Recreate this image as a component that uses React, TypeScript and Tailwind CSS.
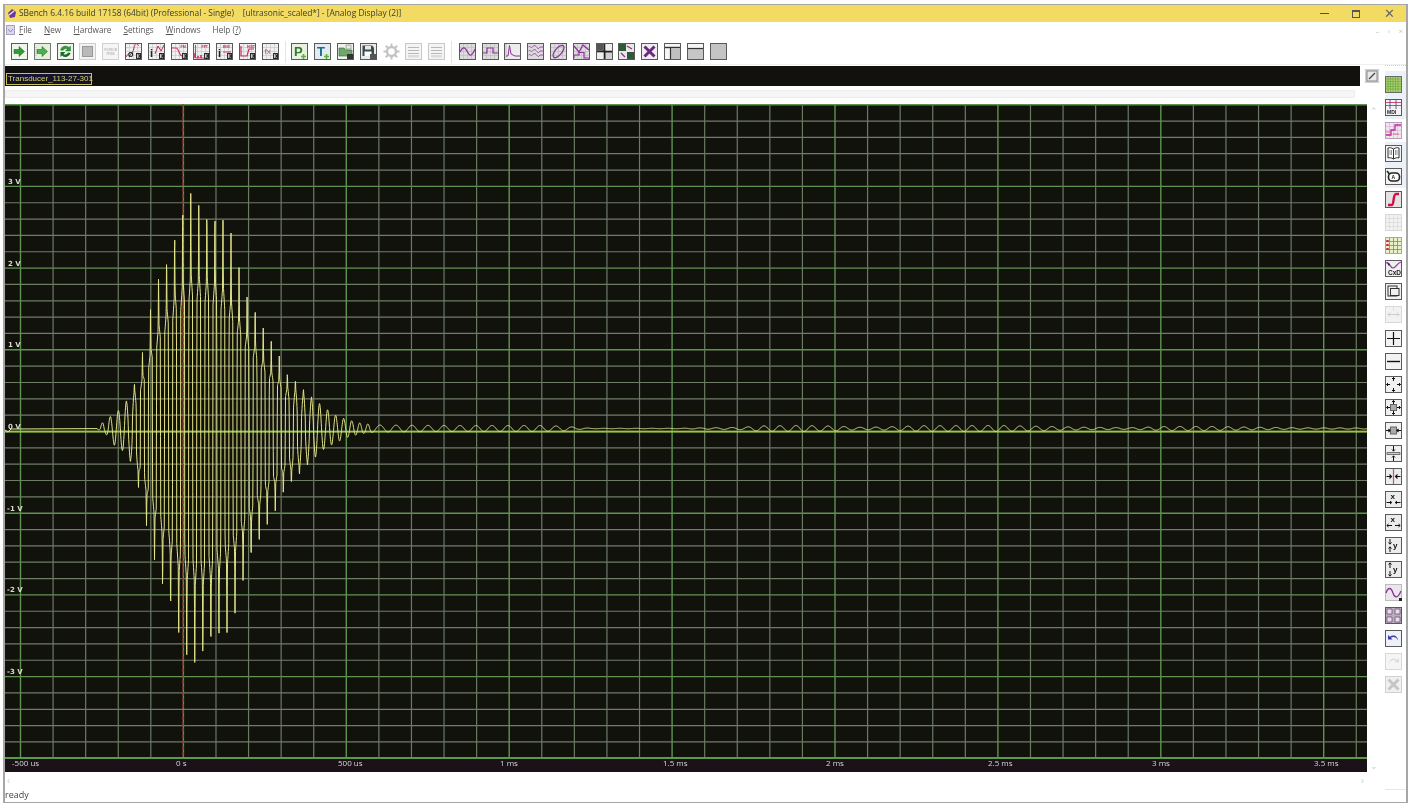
import React from "react";

const PP: number[][] = [[97,0],[103,7],[111,13],[119,19],[127,29],[135,48],[143,82],[151,122],[159,159],[167,182],[175,207],[183,224],[191,236],[199,234],[207,230],[215,227],[223,218],[231,196],[239,169],[247,145],[255,128],[263,106],[271,88],[279,77],[287,59],[295,51],[305,38],[315,29],[325,21],[335,14],[345,10],[360,6],[375,4]];
const NN: number[][] = [[97,0],[105,4],[114,16],[122,21],[131,34],[139,64],[147,101],[155,136],[163,168],[171,193],[179,218],[187,231],[195,239],[203,238],[211,232],[219,218],[227,208],[236,186],[244,159],[252,136],[260,116],[269,93],[277,81],[285,64],[293,56],[302,43],[310,33],[318,26],[326,18],[334,15],[345,9],[360,5],[375,3]];
const RR: number[][] = [[375,3.5],[450,3],[540,3],[565,2.2],[578,1],[592,0.2],[680,0.2],[700,0.6],[740,1.1],[760,2.6],[800,3],[835,2.4],[860,1.2],[885,1.6],[920,2.8],[1000,3],[1040,2.2],[1090,1.2],[1130,0.8],[1165,2],[1215,2],[1262,1.2],[1300,0.7],[1367,0.5]];

const lerp = (t: number[][], x: number) => {
  for (let i = 1; i < t.length; i++) {
    if (x <= t[i][0]) {
      const f = (x - t[i - 1][0]) / (t[i][0] - t[i - 1][0]);
      return t[i - 1][1] + f * (t[i][1] - t[i - 1][1]);
    }
  }
  return t[t.length - 1][1];
};

const SHAPE: number[][] = [[0,1],[0.4,0.66],[1.8,0.56],[2.05,-0.54],[3.6,-0.64],[4,-1],[4.4,-0.66],[5.8,-0.56],[6.05,0.54],[7.6,0.64],[8,1]];

const buildWave = () => {
  const pts: string[] = ["5,430", "8,432", "11,429", "97,428.6"];
  let ph = Math.PI / 2 - (2 * Math.PI * 94) / 8.05;
  for (let x = 97; x <= 1367; x += 0.25) {
    const period = x < 372 ? 8.05 : 16;
    ph += (2 * Math.PI * 0.25) / period;
    const s = Math.sin(ph);
    let y: number;
    if (x < 375) {
      const off = (((ph - Math.PI / 2) % (2 * Math.PI)) + 2 * Math.PI) % (2 * Math.PI);
      const step = lerp(SHAPE, (off / (2 * Math.PI)) * 8);
      const A = s >= 0 ? lerp(PP, x) : lerp(NN, x);
      const m = Math.min(Math.max((A - 25) / 40, 0), 1);
      const v = s * (1 - m) + step * m;
      y = 429 - A * v;
    } else {
      y = 428.5 - lerp(RR, x) * s;
    }
    pts.push(`${x.toFixed(2)},${y.toFixed(1)}`);
  }
  return pts.join(" ");
};

const range = (n: number) => Array.from({ length: n }, (_, i) => i);

const Plot = () => {
  const vx0 = 20.5, dx = 32.58;
  const y0 = 104.7, dy = 16.34;
  const xl: [string, number][] = [["-500 us", 12], ["0 s", 176], ["500 us", 338], ["1 ms", 500], ["1.5 ms", 663], ["2 ms", 826], ["2.5 ms", 988], ["3 ms", 1152], ["3.5 ms", 1314]];
  const yl: [string, number][] = [["3 V", 184], ["2 V", 266], ["1 V", 347], ["0 V", 429], ["-1 V", 511], ["-2 V", 592], ["-3 V", 674]];
  return (
    <svg width="1362" height="668" viewBox="5 104 1362 668" className="block shrink-0">
      <rect x="5" y="104" width="1362" height="668" fill="#12120c" />
      <rect x="5" y="758" width="1362" height="14" fill="#1b1118" />
      {range(41).map((i) => {
        const y = y0 + i * dy;
        const major = i % 5 === 0;
        return <line key={i} x1="5" x2="1367" y1={y} y2={y} stroke={major ? "#5f9350" : "#6f7c66"} strokeWidth={major ? 1.4 : 1.2} />;
      })}
      {range(42).map((i) => {
        const x = vx0 + i * dx;
        const major = i % 5 === 0;
        return <line key={i} x1={x} x2={x} y1="104" y2="758" stroke={major ? "#5f9350" : "#6a7a64"} strokeWidth={major ? 1.4 : 1.2} />;
      })}
      <line x1="183" x2="183" y1="104" y2="758" stroke="#a52a2a" strokeWidth="1.2" strokeDasharray="4 2" />
      <line x1="5" x2="1367" y1="431.7" y2="431.7" stroke="#9dc63c" strokeWidth="1.8" />
      <line x1="5" x2="1367" y1="758" y2="758" stroke="#5c9a48" strokeWidth="1.8" />
      <polyline points={buildWave()} fill="none" stroke="#e4e48a" strokeWidth="1" />
      {yl.map(([t, y]) => (
        <text key={t} x={t.startsWith("-") ? 7 : 8} y={y} fill="#d8d8cc" fontSize="7" fontWeight="700" fontFamily="'DejaVu Sans', sans-serif">{t}</text>
      ))}
      {xl.map(([t, x]) => (
        <text key={t} x={x} y="766" fill="#d6d6d6" fontSize="8" fontFamily="'Open Sans', sans-serif">{t}</text>
      ))}
    </svg>
  );
};

const Box = ({ children, f = "#f0f0f0", b = "#5a5a5a" }: { children?: React.ReactNode; f?: string; b?: string }) => (
  <svg width="17" height="17" viewBox="0 0 17 17" className="block shrink-0">
    <rect x="0.5" y="0.5" width="16" height="16" fill={f} stroke={b} />
    {children}
  </svg>
);

const GridBg = ({ c = "#c8c8c8" }: { c?: string }) => (
  <path d="M4.5 1V16M8.5 1V16M12.5 1V16M1 4.5H16M1 8.5H16M1 12.5H16" stroke={c} strokeWidth="0.7" fill="none" />
);
const K = () => (
  <g>
    <rect x="11" y="10" width="5" height="6" fill="#2a2a2a" />
    <path d="M12.5 11V15M14.6 11L12.7 13L14.6 15" stroke="#fff" strokeWidth="0.7" fill="none" />
  </g>
);
const Arrow = ({ c = "#2f9a36" }: { c?: string }) => <path d="M3 6.5H8V3.5L13.5 8.5L8 13.5V10.5H3Z" fill={c} stroke="#1d5a22" strokeWidth="0.5" />;
const P = "#8e2f9e";
const W = ({ d, c = P, w = 1.2 }: { d: string; c?: string; w?: number }) => <path d={d} stroke={c} strokeWidth={w} fill="none" />;
const Tx = ({ x, y, s, t, c = "#222", w = 700 }: { x: number; y: number; s: number; t: string; c?: string; w?: number }) => (
  <text x={x} y={y} fontSize={s} fill={c} fontWeight={w} fontFamily="'Liberation Sans', sans-serif">{t}</text>
);
const D = "#d9d9d9";

const top1 = [
  <Box key="a" f="#eef5ea"><Arrow /></Box>,
  <Box key="b" f="#e4efdc" b="#777"><path d="M2 4V13" stroke="#9fce9f" strokeDasharray="1 1" /><Arrow c="#4db04f" /></Box>,
  <Box key="c" f="#eef5ea"><path d="M3.5 7A5 5 0 0 1 12 4.5L13.5 3V8H8.5L10.5 6A3 3 0 0 0 6 7.5Z" fill="#2f9a36" stroke="#1d5a22" strokeWidth="0.4" /><path d="M13.5 10A5 5 0 0 1 5 12.5L3.5 14V9H8.5L6.5 11A3 3 0 0 0 11 9.5Z" fill="#1d6b2a" /></Box>,
  <Box key="d" f="#f1f1f1" b="#cfcfcf"><rect x="3.5" y="3.5" width="10" height="10" fill="#b9b9b9" stroke="#999" /></Box>,
  <Box key="e" f="#f5f5f5" b="#d0d0d0"><Tx x={2.5} y={7.5} s={3.6} t="FORCE" c="#a0a0a0" w={400} /><Tx x={4} y={12} s={3.6} t="TRIG" c="#a0a0a0" w={400} /></Box>,
  <Box key="f"><GridBg /><W d="M1 14C5 6 7 14 9 5S13 4 14 2" c="#b8325a" w={1} /><Tx x={3} y={13.5} s={7} t="Ø" /><K /></Box>,
  <Box key="g"><GridBg /><W d="M7 11L10 3L13 8L16 2" c="#c0285a" w={1} /><Tx x={2} y={14} s={11} t="i" /><K /></Box>,
  <Box key="h"><GridBg /><W d="M1 5H5C8 5 8 13 11 13H15" c="#d03a6a" /><Tx x={9.5} y={5} s={3.5} t="FM" c="#b03050" /><K /></Box>,
  <Box key="i"><GridBg /><path d="M2 15V10M5 15V13M8 15V12" stroke="#d0305a" strokeWidth="1.6" /><W d="M2.5 2V15H15" c="#c0305a" w={0.9} /><Tx x={8.5} y={5} s={3.5} t="FFT" c="#b03050" /><K /></Box>,
  <Box key="j"><GridBg /><Tx x={2} y={14} s={11} t="i" /><Tx x={7} y={5} s={3.5} t="ENV" c="#b03050" /><W d="M7 9H15" c="#c0305a" w={0.9} /><K /></Box>,
  <Box key="k"><GridBg /><W d="M2 3V13H8L10 6L15 6" c="#c0305a" /><Tx x={8} y={4.5} s={3.5} t="HIST" c="#b03050" /><K /></Box>,
  <Box key="l"><GridBg /><Tx x={2.5} y={11} s={8} t="fx" c="#c05070" w={400} /><K /></Box>,
];

const top2 = [
  <Box key="a" f="#e9f2e0"><Tx x={3} y={13} s={13} t="P" c="#2d7a30" /><path d="M10 13.5H15M12.5 11V16" stroke="#5fb13a" strokeWidth="1.6" /></Box>,
  <Box key="b" f="#e1ebf2"><Tx x={3} y={13} s={13} t="T" c="#1e6a8a" /><path d="M10 13.5H15M12.5 11V16" stroke="#5fb13a" strokeWidth="1.6" /></Box>,
  <Box key="c" f="#eef2ea"><path d="M2 5H7L8.5 7H15V13H2Z" fill="#6fa86a" stroke="#2e6a35" strokeWidth="0.6" /><path d="M9 2H14V6H9Z" fill="#e8e8e8" stroke="#666" strokeWidth="0.5" /><rect x="10" y="11" width="6" height="5" fill="#333" /></Box>,
  <Box key="d" f="#e6ecea"><path d="M2.5 2.5H12L14 4.5V13H2.5Z" fill="#3c4a50" /><rect x="5" y="3" width="6" height="3.5" fill="#e8e8e8" /><rect x="4.5" y="8.5" width="7" height="4.5" fill="#fff" /><rect x="10" y="11" width="6" height="5" fill="#555" /></Box>,
  <svg key="e" width="17" height="17" viewBox="0 0 17 17" className="block shrink-0"><circle cx="8.5" cy="8.5" r="4.5" fill="none" stroke="#c4c4c4" strokeWidth="2.4" /><path d="M8.5 0.5V4M8.5 13V16.5M0.5 8.5H4M13 8.5H16.5M2.8 2.8L5.3 5.3M11.7 11.7L14.2 14.2M14.2 2.8L11.7 5.3M5.3 11.7L2.8 14.2" stroke="#c4c4c4" strokeWidth="2" /></svg>,
  <Box key="f" f="#f4f4f4" b="#c8c8c8"><path d="M3 4.5H14M3 7.5H14M3 10.5H14" stroke="#b8b8b8" strokeWidth="1" /><rect x="3" y="12" width="11" height="2.5" fill="#dcdcdc" /></Box>,
  <Box key="g" f="#f4f4f4" b="#c8c8c8"><path d="M3 4.5H14M3 7.5H14M3 10.5H14" stroke="#b8b8b8" strokeWidth="1" /><rect x="3" y="12" width="11" height="2.5" fill="#dcdcdc" /></Box>,
];

const top3 = [
  <Box key="a" f="#dcdcdc"><GridBg c="#bdbdbd" /><W d="M1 9C4 3 6 4 8.5 9S13 13 16 6" /></Box>,
  <Box key="b" f="#dcdcdc"><GridBg c="#bdbdbd" /><W d="M1 10H5V5H11V10H16" /></Box>,
  <Box key="c" f="#ececec"><W d="M2 13H4L5.5 2.5L7 11L9 12L11 13H16" w={1} /><path d="M2 1V15" stroke="#999" strokeWidth="0.6" /></Box>,
  <Box key="d" f="#dcdcdc"><W d="M1.5 4C3 2 4 6 5.5 4S8 2 9.5 4S12 6 13 4T16 4M1.5 8C3 6 4 10 5.5 8S8 6 9.5 8S12 10 13 8T16 8M1.5 12C3 10 4 14 5.5 12S8 10 9.5 12S12 14 13 12T16 12" w={0.8} /></Box>,
  <Box key="e" f="#dcdcdc"><GridBg c="#bdbdbd" /><ellipse cx="8.5" cy="8.5" rx="7.5" ry="3.4" transform="rotate(-50 8.5 8.5)" fill="none" stroke={P} strokeWidth="1.2" /></Box>,
  <Box key="f" f="#dcdcdc"><GridBg c="#bdbdbd" /><W d="M1 3L6 9L10 2L16 7" /><W d="M1 15V12H6V9.5H11V15H16" /></Box>,
  <Box key="g" f="#d0d0d0"><path d="M8.5 1V16M1 8.5H16" stroke="#222" strokeWidth="2" /><rect x="1" y="1" width="6.5" height="6.5" fill="#555" /><rect x="1" y="9.5" width="6.5" height="6.5" fill="#eee" /><rect x="9.5" y="1" width="6.5" height="6.5" fill="#eee" /></Box>,
  <Box key="h" f="#e8e8e8"><rect x="1" y="1" width="7" height="7" fill="#2e5a35" /><rect x="9" y="9" width="7" height="7" fill="#2e5a35" /><path d="M9 3L14 6M3 10L7 14" stroke={P} strokeWidth="1.3" /></Box>,
  <Box key="i" f="#eeeeee"><path d="M3.5 3.5L13.5 13.5M13.5 3.5L3.5 13.5" stroke="#6a2a80" strokeWidth="3" /></Box>,
  <Box key="j" f="#f5f5f5"><path d="M1 4.5H16" stroke="#333" strokeWidth="1.4" /><rect x="7" y="5" width="9" height="11" fill="#c0c0c0" /><path d="M6.5 5V16" stroke="#333" strokeWidth="1.2" /></Box>,
  <Box key="k" f="#c6c6c6"><rect x="1" y="1" width="15" height="4" fill="#f5f5f5" /><path d="M1 5.5H16" stroke="#333" strokeWidth="1.2" /></Box>,
  <Box key="l" f="#c4c4c4" />,
];

const HArrows = () => <path d="M1.5 8.5H6M4.5 6.5L6.5 8.5L4.5 10.5M15.5 8.5H11M12.5 6.5L10.5 8.5L12.5 10.5" stroke="#111" strokeWidth="1.1" fill="none" />;
const OutArrows = () => <path d="M8.5 1.5V5M7 3L8.5 1.5L10 3M8.5 15.5V12M7 14L8.5 15.5L10 14M1.5 8.5H5M3 7L1.5 8.5L3 10M15.5 8.5H12M14 7L15.5 8.5L14 10" stroke="#111" strokeWidth="1" fill="none" />;

const right1 = [
  <Box key="a" f="#a8cf6a" b="#6a6a6a"><path d="M3 1V16M5.5 1V16M8 1V16M10.5 1V16M13 1V16M1 3H16M1 5.5H16M1 8H16M1 10.5H16M1 13H16" stroke="#5f9a3a" strokeWidth="0.5" /></Box>,
  <Box key="b" f="#f3f3f3"><path d="M1 3.5H16M1 6.5H16" stroke="#c02a4a" strokeWidth="0.8" /><path d="M5 1V10M11 1V10" stroke="#3a3a9a" strokeWidth="0.8" /><Tx x={2} y={15} s={5} t="MDI" /></Box>,
  <Box key="c" f="#f0e6f0" b="#b8a0b8"><GridBg c="#d8b8d8" /><W d="M1 13H6V8H10V3H16" c="#c02aa0" w={1.3} /><W d="M1 10H5M8 12H14" c="#c07030" w={0.8} /></Box>,
];
const right2 = [
  <Box key="d" f="#f3f3f3"><path d="M8.5 4C6.5 2.5 4.5 2.5 3 3V13C4.5 12.5 6.5 12.5 8.5 14C10.5 12.5 12.5 12.5 14 13V3C12.5 2.5 10.5 2.5 8.5 4V14" fill="#fff" stroke="#333" strokeWidth="1" /><path d="M5 5V10M6.5 5V10M10.5 5V10M12 5V10" stroke="#555" strokeWidth="0.6" /></Box>,
  <Box key="e" f="#f3f3f3"><path d="M2 3L4.5 6" stroke="#222" strokeWidth="1.6" /><rect x="3.5" y="5" width="11" height="8" rx="3.5" fill="#fff" stroke="#222" strokeWidth="1.6" /><Tx x={6.5} y={11} s={5} t="A" /></Box>,
];
const right3 = [
  <Box key="f" f="#e2e2e2"><path d="M3 14H7C9 14 8 3 11 3H14" stroke="#d01040" strokeWidth="2.4" fill="none" /></Box>,
  <Box key="g" f="#f2f2f2" b="#d8d8d8"><GridBg c={D} /></Box>,
  <Box key="h" f="#e8f0c8" b="#a8a8a8"><GridBg c="#4f9a3a" /><path d="M2.5 3V5M2.5 7V9M2.5 11V13" stroke="#d02a3a" strokeWidth="2.4" /></Box>,
  <Box key="i" f="#eeeeee"><W d="M1 3C4 1 5 8 8 8S12 3 16 2" /><path d="M2 3L4 6L5 4" fill="#222" /><Tx x={3} y={15} s={6.5} t="CxD" /></Box>,
  <Box key="j" f="#f0f0f0"><rect x="3" y="3" width="9" height="10" fill="none" stroke="#333" strokeWidth="1" /><rect x="5.5" y="5.5" width="8.5" height="7" fill="#f0f0f0" stroke="#333" strokeWidth="1" /></Box>,
  <Box key="k" f="#f2f2f2" b="#d8d8d8"><path d="M3 8.5H14M5 6.5L3 8.5L5 10.5M12 6.5L14 8.5L12 10.5" stroke="#c8c8c8" strokeWidth="0.9" fill="none" /><path d="M8.5 1V5" stroke="#dedede" /></Box>,
  <Box key="l" f="#f3f3f3"><path d="M8.5 2V15M2 8.5H15" stroke="#111" strokeWidth="1.2" /></Box>,
  <Box key="m" f="#f3f3f3"><path d="M2 8.5H15" stroke="#111" strokeWidth="1.4" /></Box>,
  <Box key="n" f="#f0f0f0"><OutArrows /></Box>,
  <Box key="o" f="#f0f0f0"><rect x="5.5" y="5.5" width="6" height="6" fill="#aaa" stroke="#666" /><OutArrows /></Box>,
  <Box key="p" f="#f0f0f0"><rect x="5.5" y="5" width="6" height="7" fill="#aaa" stroke="#666" /><path d="M1 8.5H5M3.5 7L5 8.5L3.5 10M16 8.5H12M13.5 7L12 8.5L13.5 10" stroke="#111" strokeWidth="1.1" fill="none" /></Box>,
  <Box key="q" f="#f0f0f0"><path d="M2 7.5H15V9.5H2Z" fill="#ccc" stroke="#444" strokeWidth="0.7" /><path d="M8.5 1V6M7 4.5L8.5 6.2L10 4.5M8.5 16V11M7 12.5L8.5 10.8L10 12.5" stroke="#111" strokeWidth="1" fill="none" /></Box>,
  <Box key="r" f="#ececec"><path d="M8.5 1V16" stroke="#c84a9a" strokeWidth="1.2" /><HArrows /></Box>,
  <Box key="s" f="#ececec"><Tx x={5.5} y={7.5} s={8} t="x" c="#111" /><path d="M1.5 11.5H6.5M5 10L6.8 11.5L5 13M15.5 11.5H10.5M12 10L10.2 11.5L12 13" stroke="#111" strokeWidth="1" fill="none" /></Box>,
  <Box key="t" f="#ececec"><Tx x={5.5} y={7.5} s={8} t="x" c="#111" /><path d="M2 11.5H7M3.5 10L1.8 11.5L3.5 13M15 11.5H10M13.5 10L15.2 11.5L13.5 13" stroke="#111" strokeWidth="1" fill="none" /></Box>,
  <Box key="u" f="#ececec"><path d="M5 2V7M3.5 5.5L5 7.2L6.5 5.5M5 15V10M3.5 11.5L5 9.8L6.5 11.5" stroke="#111" strokeWidth="1" fill="none" /><Tx x={8} y={11} s={8} t="y" c="#111" /></Box>,
  <Box key="v" f="#ececec"><path d="M5 7V2M3.5 3.5L5 1.8L6.5 3.5M5 10V15M3.5 13.5L5 15.2L6.5 13.5" stroke="#111" strokeWidth="1" fill="none" /><Tx x={8} y={11} s={8} t="y" c="#111" /></Box>,
  <Box key="w" f="#e8e8e8" b="#bbbbbb"><W d="M1 9C3 3 6 3 8 9S13 14 16 7" c="#8e2f9e" w={1.3} /><rect x="14" y="14" width="3" height="3" fill="#222" /></Box>,
  <Box key="x" f="#b8b0b8"><path d="M2 2H7V7H2ZM10 2H15V7H10ZM2 10H7V15H2ZM10 10H15V15H10Z" fill="#e6e0e6" stroke="#7a4a8a" strokeWidth="0.8" /></Box>,
  <Box key="y" f="#eef0f8"><path d="M3 5V9.5H7.5L5.8 7.8C8 6.3 11.5 6.8 13 10.5C12.8 6.2 8.5 3.8 4.8 6.8Z" fill="#3a3aa8" /></Box>,
  <Box key="z" f="#f5f5f5" b="#d8d8d8"><path d="M14 5V9.5H9.5L11.2 7.8C9 6.3 5.5 6.8 4 10.5C4.2 6.2 8.5 3.8 12.2 6.8Z" fill="#dcdcdc" /></Box>,
  <Box key="zz" f="#f0f0f0" b="#d0d0d0"><path d="M3.5 3.5L13.5 13.5M13.5 3.5L3.5 13.5" stroke="#c6c6c6" strokeWidth="3" /></Box>,
];

const Menu = ({ u, r, ml }: { u: string; r: string; ml: string }) => (
  <span className={ml}><span className="underline">{u}</span>{r}</span>
);

export default function App() {
  return (
    <div className="w-[1412px] h-[808px] bg-white pt-1 pl-[3px] pr-1 pb-[5px] overflow-hidden blur-[0.35px] font-['Open_Sans','Noto_Sans',sans-serif]">
      <div className="h-full flex flex-col border-x-2 border-y border-[#a6a6a6] bg-white">
        <div className="h-[17px] shrink-0 bg-[#f3da63] flex items-center text-[8.4px] text-[#3c3c30] pl-[1px] whitespace-pre">
          <svg width="11" height="11" viewBox="0 0 11 11" className="shrink-0 mr-[2px]"><path d="M2 5L6 1L10 4L9 9L4 10Z" fill="#6a3a9a" /><path d="M3 7L8 3" stroke="#e8e8ff" strokeWidth="1.2" /></svg>
          <span>SBench 6.4.16 build 17158 (64bit) (Professional - Single)    [ultrasonic_scaled*] - [Analog Display (2)]</span>
          <div className="ml-auto flex items-center pr-[11px]">
            <span className="w-[9px] h-[1px] bg-[#8c3a20]" />
            <span className="ml-[23px] w-[8px] h-[8px] border border-t-2 border-[#555]" />
            <span className="ml-[24px] text-[13px] leading-none text-[#666] font-['DejaVu_Sans',sans-serif] font-light">✕</span>
          </div>
        </div>
        <div className="h-[17px] shrink-0 flex items-center text-[8.2px] text-[#555] pl-[1px]">
          <svg width="10" height="11" viewBox="0 0 10 11" className="shrink-0"><rect x="0.5" y="0.5" width="8" height="9" fill="#dcd8ec" stroke="#a8a0c0" /><path d="M2 4L4.5 7L7 4" stroke="#9088b0" fill="none" /></svg>
          <Menu u="F" r="ile" ml="ml-[3px]" />
          <Menu u="N" r="ew" ml="ml-[12px]" />
          <Menu u="H" r="ardware" ml="ml-[12.5px]" />
          <Menu u="S" r="ettings" ml="ml-[12px]" />
          <Menu u="W" r="indows" ml="ml-[12px]" />
          <span className="ml-[12px]">Help (<span className="underline">?</span>)</span>
          <div className="ml-auto flex items-center gap-[8px] pr-[3px] text-[8px] leading-none text-[#c4c4c4]">
            <span>–</span><span>▫</span><span>×</span>
          </div>
        </div>
        <div className="h-[26px] shrink-0 flex items-center pl-[6px] gap-[5.8px] border-b border-[#f0f0f0]">
          {top1}
          <span className="w-[1px] h-[22px] bg-[#e4e4e4]" />
          {top2}
          <span className="w-[1px] h-[22px] bg-[#e4e4e4] mx-[0.5px]" />
          {top3}
        </div>
        <div className="flex-1 min-h-0 flex">
          <div className="w-[1376px] shrink-0 flex flex-col">
            <div className="h-[20px] shrink-0 flex mt-[1px]">
              <div className="w-[1355px] bg-[#12110d] flex items-end pl-[1px] pb-[1px]">
                <span className="h-[12px] w-[86px] border border-[#c8bf55] bg-[#14142c] text-[8px] leading-[10px] text-[#d8d06a] pl-[1px] whitespace-nowrap font-['Liberation_Sans',sans-serif]">Transducer_113-27-301</span>
              </div>
              <div className="ml-[5px] mt-[3px]">
                <svg width="14" height="14" viewBox="0 0 14 14" className="block"><rect width="14" height="14" fill="#cfcfcf" /><rect x="2" y="2" width="10" height="10" fill="#e8e8e8" stroke="#8a8a8a" /><path d="M4 10L10 4" stroke="#444" strokeWidth="1.2" /></svg>
              </div>
            </div>
            <div className="h-[18px] shrink-0 pt-[4px]">
              <div className="w-[1350px] h-[8px] bg-[#f6f6f6] border border-[#eeeeee]" />
            </div>
            <div className="h-[668px] shrink-0 flex">
              <Plot />
              <div className="flex-1 flex flex-col items-center justify-between py-[2px] text-[9px] leading-none text-[#c8c8c8]">
                <span>⌃</span>
                <span>⌄</span>
              </div>
            </div>
            <div className="flex-1 min-h-0 flex flex-col overflow-hidden">
              <div className="h-[17px] shrink-0 flex items-center justify-between pl-[2px] pr-[17px] text-[10px] text-[#cfcfcf]">
                <span>‹</span>
                <span>›</span>
              </div>
              <div className="text-[9px] leading-[12px] text-[#444]">ready</div>
            </div>
          </div>
          <div className="flex-1 flex flex-col items-center pl-[4px] pt-0">
            <div className="w-full h-[4px] border-t border-dotted border-[#cfcfcf] mb-[2px]" />
            <div className="w-full flex flex-col items-start gap-[6px] bg-[#eaf1f8] pt-[5px] pb-[3px]">
              {right1.slice(0, 2)}
            </div>
            <div className="w-full flex flex-col items-start pt-[3px] pb-[3px]">
              {right1[2]}
            </div>
            <div className="w-full flex flex-col items-start gap-[6px] bg-[#eaf1f8] pt-[3px] pb-[3px]">
              {right2}
            </div>
            <div className="w-full flex flex-col items-start gap-[6.1px] pt-[3px]">
              {right3}
            </div>
            <div className="mt-auto w-full h-[13px] border-t border-[#e6e6e6]" />
          </div>
        </div>
      </div>
    </div>
  );
}
